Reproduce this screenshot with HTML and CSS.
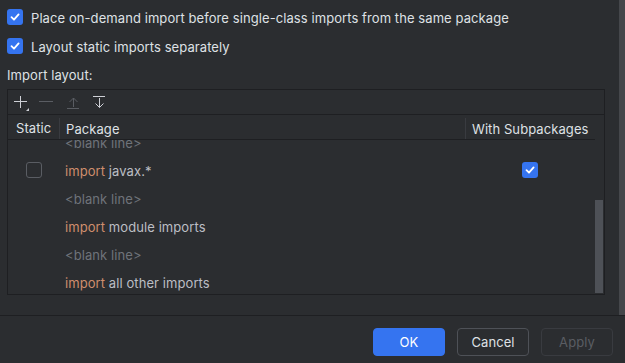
FILE: index.html
```html
<!DOCTYPE html>
<html>
<head>
    <link rel="stylesheet" href="styles.css">
</head>
<body>
    <div class="page">
        <div class="content">
            <div class="main">
                <label class="option">
                    <span class="check checked">
                        <svg width="16" height="16" viewBox="0 0 16 16"><path d="M4.5 8.2 L7 10.7 L11.6 5.4" fill="none" stroke="#fff" stroke-width="1.8" stroke-linecap="round" stroke-linejoin="round"/></svg>
                    </span>
                    <span class="option-text">Place on-demand import before single-class imports from the same package</span>
                </label>
                <label class="option">
                    <span class="check checked">
                        <svg width="16" height="16" viewBox="0 0 16 16"><path d="M4.5 8.2 L7 10.7 L11.6 5.4" fill="none" stroke="#fff" stroke-width="1.8" stroke-linecap="round" stroke-linejoin="round"/></svg>
                    </span>
                    <span class="option-text">Layout static imports separately</span>
                </label>

                <div class="section-label">Import layout:</div>

                <div class="table">
                    <div class="toolbar">
                        <svg class="tool" width="16" height="16" viewBox="0 0 16 16">
                            <path d="M2 7.5 H15 M8.5 2 V14" stroke="#ced0d6" stroke-width="1"/>
                            <path d="M14 17 L17 14 L17 17 Z" fill="#ced0d6"/>
                        </svg>
                        <svg class="tool" width="16" height="16" viewBox="0 0 16 16">
                            <path d="M1 7.5 H15" stroke="#5a5d63" stroke-width="1"/>
                        </svg>
                        <svg class="tool" width="16" height="16" viewBox="0 0 16 16">
                            <path d="M9.5 4 V13 M5.5 8 L9.5 4 L13.5 8 M3 14.5 H15" fill="none" stroke="#5a5d63" stroke-width="1"/>
                        </svg>
                        <svg class="tool" width="16" height="16" viewBox="0 0 16 16">
                            <path d="M3 2.5 H15 M9.5 4 V13.5 M5.5 9.5 L9.5 13.5 L13.5 9.5" fill="none" stroke="#ced0d6" stroke-width="1"/>
                        </svg>
                    </div>

                    <div class="header">
                        <div class="col-static">Static</div>
                        <div class="col-package divided">Package</div>
                        <div class="col-sub divided">With Subpackages</div>
                    </div>

                    <div class="body">
                        <div class="rows">
                            <div class="row">
                                <div class="col-static"></div>
                                <div class="col-package blank">&lt;blank line&gt;</div>
                                <div class="col-sub"></div>
                            </div>
                            <div class="row">
                                <div class="col-static"><span class="check"></span></div>
                                <div class="col-package"><span class="kw">import</span> javax.*</div>
                                <div class="col-sub">
                                    <span class="check checked">
                                        <svg width="16" height="16" viewBox="0 0 16 16"><path d="M4.5 8.2 L7 10.7 L11.6 5.4" fill="none" stroke="#fff" stroke-width="1.8" stroke-linecap="round" stroke-linejoin="round"/></svg>
                                    </span>
                                </div>
                            </div>
                            <div class="row">
                                <div class="col-static"></div>
                                <div class="col-package blank">&lt;blank line&gt;</div>
                                <div class="col-sub"></div>
                            </div>
                            <div class="row">
                                <div class="col-static"></div>
                                <div class="col-package"><span class="kw">import</span> module imports</div>
                                <div class="col-sub"></div>
                            </div>
                            <div class="row">
                                <div class="col-static"></div>
                                <div class="col-package blank">&lt;blank line&gt;</div>
                                <div class="col-sub"></div>
                            </div>
                            <div class="row">
                                <div class="col-static"></div>
                                <div class="col-package"><span class="kw">import</span> all other imports</div>
                                <div class="col-sub"></div>
                            </div>
                        </div>
                        <div class="thumb"></div>
                    </div>
                </div>
            </div>
            <div class="outer-scroll"></div>
        </div>

        <div class="footer">
            <button class="btn primary">OK</button>
            <button class="btn">Cancel</button>
            <button class="btn disabled">Apply</button>
        </div>
    </div>
</body>
</html>
```

FILE: styles.css
```css
body {
    margin: 0;
    background-color: #2b2d30;
    color: #dfe1e5;
    font-family: Inter, "Noto Sans", sans-serif;
    font-size: 13px;
    letter-spacing: 0.08px;
}

.page {
    display: flex;
    flex-direction: column;
    height: 363px;
    overflow: hidden;
}

.content {
    flex: 1;
    display: flex;
    min-height: 0;
}

.main {
    flex: 1;
    padding: 9px 0 0 7px;
}

.outer-scroll {
    width: 6px;
    background-color: #45474b;
}

.option {
    display: flex;
    align-items: center;
    gap: 8px;
    height: 16px;
    margin-bottom: 13px;
    line-height: 16px;
}

.option-text {
    padding-top: 2px;
}

.check {
    display: inline-flex;
    box-sizing: border-box;
    width: 16px;
    height: 16px;
    border: 1px solid #5a5d63;
    border-radius: 3px;
    flex-shrink: 0;
}

.check.checked {
    background-color: #3574f0;
    border: none;
}

.section-label {
    margin-top: 2px;
    line-height: 16px;
    margin-bottom: 6px;
}

.table {
    width: 598px;
    height: 206px;
    box-sizing: border-box;
    border: 1px solid #1e1f22;
    display: flex;
    flex-direction: column;
}

.toolbar {
    display: flex;
    align-items: center;
    gap: 10px;
    height: 24px;
    padding-left: 4px;
    border-bottom: 1px solid #1e1f22;
}

.tool {
    overflow: visible;
}

.header {
    display: grid;
    grid-template-columns: 51px 406px 130px;
    height: 24px;
    width: 587px;
    align-items: center;
    border-bottom: 1px solid #1e1f22;
    color: #dfe1e5;
}

.header .col-static {
    padding-left: 8px;
    padding-top: 2px;
}

.header .divided {
    border-left: 1px solid #393b40;
    height: 21px;
    line-height: 23px;
    margin-top: 2px;
    padding-left: 6px;
}

.body {
    position: relative;
    flex: 1;
    overflow: hidden;
}

.rows {
    margin-top: -12px;
}

.row {
    display: grid;
    grid-template-columns: 51px 406px 130px;
    height: 28px;
    align-items: center;
}

.row .col-static,
.row .col-sub {
    display: flex;
    justify-content: center;
}

.row .col-package {
    padding: 2px 0 0 6px;
    color: #bcbec4;
}

.row .col-package.blank {
    color: #6f737a;
}

.kw {
    color: #cf8e6d;
}

.thumb {
    position: absolute;
    right: 1px;
    bottom: 1px;
    width: 8px;
    height: 93px;
    background-color: #4e5157;
}

.footer {
    display: flex;
    justify-content: flex-end;
    gap: 12px;
    height: 48px;
    box-sizing: border-box;
    padding: 12px 12px 0 0;
    border-top: 1px solid #1e1f22;
}

.btn {
    width: 72px;
    height: 28px;
    box-sizing: border-box;
    border: 1px solid #4e5157;
    border-radius: 4px;
    background-color: #2b2d30;
    color: #dfe1e5;
    font-family: Inter, "Noto Sans", sans-serif;
    font-size: 13px;
    letter-spacing: 0.08px;
}

.btn.primary {
    background-color: #3574f0;
    border-color: #3574f0;
    color: #fff;
}

.btn.disabled {
    border-color: #393b40;
    color: #5a5d63;
}
```
